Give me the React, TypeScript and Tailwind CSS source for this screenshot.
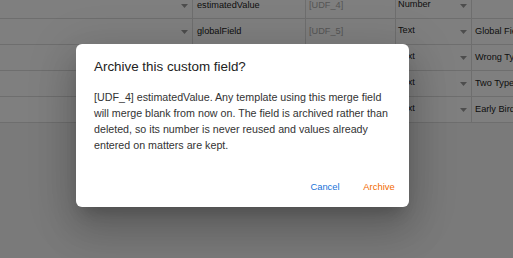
import React from 'react';

interface FieldRow {
  name: string;
  code: string;
  type: string;
  label: string;
}

const rows: FieldRow[] = [
  { name: 'estimatedValue', code: '[UDF_4]', type: 'Number', label: '' },
  { name: 'globalField', code: '[UDF_5]', type: 'Text', label: 'Global Field' },
  { name: 'wrongType', code: '[UDF_6]', type: 'Text', label: 'Wrong Type' },
  { name: 'twoTypes', code: '[UDF_7]', type: 'Text', label: 'Two Types' },
  { name: 'earlyBird', code: '[UDF_8]', type: 'Text', label: 'Early Bird' },
];

const Caret = () => (
  <svg width="7" height="4" viewBox="0 0 7 4" className="shrink-0">
    <polygon points="0,0 7,0 3.5,4" fill="#9a9a9a" />
  </svg>
);

const App: React.FC = () => {
  return (
    <div
      className="relative h-[258px] w-full overflow-hidden bg-[#f4f4f4]"
      style={{ fontFamily: '"Liberation Sans", Arial, sans-serif' }}
    >
      {/* Fields table (scrolled) */}
      <div className="-mt-[7px] grid w-[600px] grid-cols-[192px_112px_89px_75px_1fr] auto-rows-[25px] gap-px bg-[#dcdcdc] pb-px text-[9.2px] text-[#222]">
        {rows.map((r) => (
          <React.Fragment key={r.code}>
            <div className="flex items-center justify-end bg-white pr-[4px]">
              <Caret />
            </div>
            <div className="flex items-center bg-white pl-[4px]">{r.name}</div>
            <div className="flex items-center bg-white pl-[3px] text-[#ababab]">{r.code}</div>
            <div className="flex items-center justify-between bg-white pl-[2px] pr-[4px]">
              <span className="-mt-[1px]">{r.type}</span>
              <Caret />
            </div>
            <div className="flex items-center bg-white pl-[3px]">{r.label}</div>
          </React.Fragment>
        ))}
      </div>

      {/* Backdrop */}
      <div className="absolute inset-0 bg-black/50" />

      {/* Dialog */}
      <div className="absolute left-[76px] top-[44px] w-[333px] rounded-[6px] bg-white shadow-[0_11px_15px_-7px_rgba(0,0,0,0.2),0_24px_38px_3px_rgba(0,0,0,0.14),0_9px_46px_8px_rgba(0,0,0,0.12)]">
        <h2 className="px-[18px] pt-[12px] text-[13.4px] leading-[21px] font-normal text-[#222]">
          Archive this custom field?
        </h2>
        <p className="mt-[12px] px-[18px] pb-[15px] text-[10.7px] leading-[16px] text-[#333]">
          [UDF_4] estimatedValue. Any template using this merge field will merge blank from now on. The field is
          archived rather than deleted, so its number is never reused and values already entered on matters are kept.
        </p>
        <div className="flex justify-end gap-[6px] p-[6px]">
          <button className="h-[27px] min-w-[48px] rounded-[3px] px-[6px] text-[9.4px] text-[#1872d8]">
            Cancel
          </button>
          <button className="h-[27px] min-w-[48px] rounded-[3px] px-[6px] text-[9.4px] text-[#f26a00]">
            Archive
          </button>
        </div>
      </div>
    </div>
  );
};

export default App;
